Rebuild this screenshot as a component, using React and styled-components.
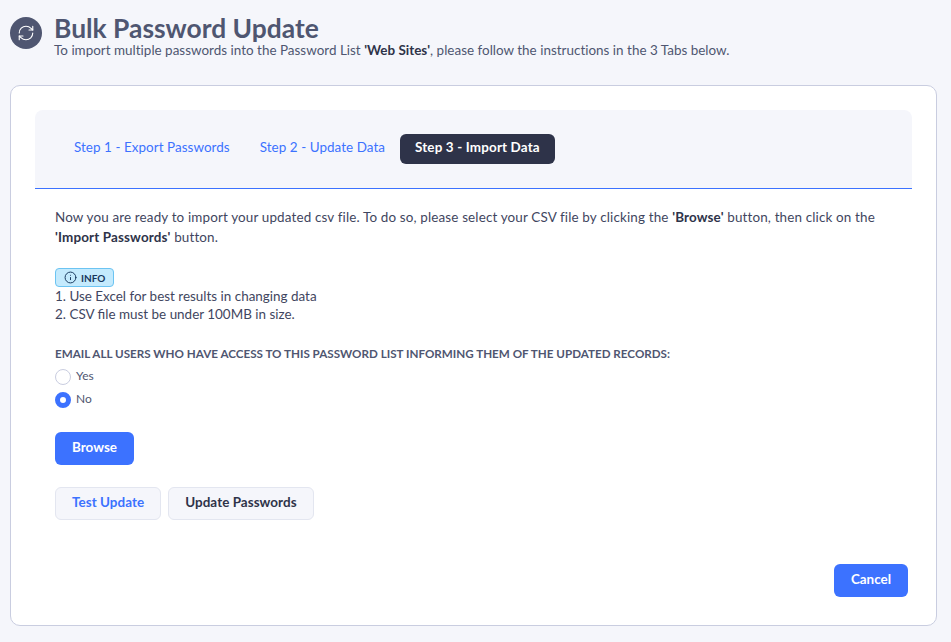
import React from "react";
import styled, { createGlobalStyle } from "styled-components";
import { RefreshCw, Info } from "lucide-react";

const GlobalStyle = createGlobalStyle`
  html, body {
    margin: 0;
    padding: 0;
    background: #f5f6fb;
  }
  body {
    font-family: Lato, "Noto Sans", "Liberation Sans", sans-serif;
    font-size: 13.45px;
    color: #3f4660;
  }
`;

const App = () => {
  return (
    <Page>
      <GlobalStyle />
      <Header>
        <HeaderIcon>
          <RefreshCw size={18} strokeWidth={1.5} />
        </HeaderIcon>
        <HeaderText>
          <Title>Bulk Password Update</Title>
          <Subtitle>
            To import multiple passwords into the Password List <b>'Web Sites'</b>, please follow
            the instructions in the 3 Tabs below.
          </Subtitle>
        </HeaderText>
      </Header>
      <Card>
        <Tabs>
          <Tab>Step 1 - Export Passwords</Tab>
          <Tab>Step 2 - Update Data</Tab>
          <Tab $active>Step 3 - Import Data</Tab>
        </Tabs>
        <Body>
          <Intro>
            Now you are ready to import your updated csv file. To do so, please select your CSV file
            by clicking the <b>'Browse'</b> button, then click on the <b>'Import Passwords'</b>{" "}
            button.
          </Intro>
          <Badge>
            <Info size={13} strokeWidth={1.8} />
            INFO
          </Badge>
          <Notes>
            <div>1. Use Excel for best results in changing data</div>
            <div>2. CSV file must be under 100MB in size.</div>
          </Notes>
          <Label>
            Email all users who have access to this password list informing them of the updated
            records:
          </Label>
          <RadioRow>
            <Radio />
            <RadioText>Yes</RadioText>
          </RadioRow>
          <RadioRow>
            <Radio $checked />
            <RadioText>No</RadioText>
          </RadioRow>
          <BrowseRow>
            <PrimaryButton>Browse</PrimaryButton>
          </BrowseRow>
          <ButtonRow>
            <LightButton $blue>Test Update</LightButton>
            <LightButton>Update Passwords</LightButton>
          </ButtonRow>
          <Footer>
            <PrimaryButton $wide>Cancel</PrimaryButton>
          </Footer>
        </Body>
      </Card>
    </Page>
  );
};

export default App;

const Page = styled.div`
  width: 951px;
  height: 642px;
  box-sizing: border-box;
  padding: 14px 14px 16px 10px;
  overflow: hidden;
`;

const Header = styled.div`
  display: flex;
  align-items: flex-start;
  gap: 12px;
  height: 46px;
  margin-bottom: 25px;
`;

const HeaderIcon = styled.div`
  width: 32px;
  height: 32px;
  margin-top: 3px;
  border-radius: 50%;
  background: #4f5671;
  color: #fff;
  display: flex;
  align-items: center;
  justify-content: center;
  flex-shrink: 0;
`;

const HeaderText = styled.div`
  display: flex;
  flex-direction: column;
`;

const Title = styled.div`
  font-size: 26.4px;
  font-weight: 700;
  line-height: 29px;
  color: #4f5671;
`;

const Subtitle = styled.div`
  line-height: 14px;
  letter-spacing: 0.01px;
  color: #4f5671;

  b {
    color: #2e3349;
  }
`;

const Card = styled.div`
  height: 541px;
  box-sizing: border-box;
  padding: 24px;
  background: #fff;
  border: 1px solid #c9cde0;
  border-radius: 10px;
  display: flex;
  flex-direction: column;
`;

const Tabs = styled.div`
  height: 79px;
  box-sizing: border-box;
  padding: 24px 24px 0;
  display: flex;
  align-items: flex-start;
  background: #f5f6fb;
  border-bottom: 1px solid #3c72ff;
  border-radius: 8px 8px 0 0;
  flex-shrink: 0;
`;

const Tab = styled.div`
  height: 30px;
  box-sizing: border-box;
  padding: 0 15px 5px;
  display: flex;
  align-items: center;
  border-radius: 6px;
  font-weight: ${(p) => (p.$active ? 700 : 400)};
  letter-spacing: ${(p) => (p.$active ? 0.15 : 0.05)}px;
  color: ${(p) => (p.$active ? "#fff" : "#3c72ff")};
  background: ${(p) => (p.$active ? "#2e3349" : "transparent")};
`;

const Body = styled.div`
  flex: 1;
  display: flex;
  flex-direction: column;
  padding: 18px 4px 4px 20px;
`;

const Intro = styled.div`
  max-width: 840px;
  line-height: 20px;
  letter-spacing: 0.145px;
  color: #3f4660;

  b {
    color: #2e3349;
  }
`;

const Badge = styled.div`
  align-self: flex-start;
  margin-top: 21px;
  height: 19px;
  box-sizing: border-box;
  padding: 0 8px;
  display: flex;
  align-items: center;
  gap: 4px;
  font-size: 10px;
  font-weight: 700;
  color: #17365c;
  background: #c4eafd;
  border: 1px solid #6cc4f2;
  border-radius: 4px;
`;

const Notes = styled.div`
  line-height: 18px;
  color: #3f4660;
`;

const Label = styled.div`
  margin-top: 23px;
  font-size: 11.65px;
  font-weight: 700;
  line-height: 16px;
  text-transform: uppercase;
  color: #4f5671;
`;

const RadioRow = styled.div`
  display: flex;
  align-items: center;
  gap: 5px;
  height: 16px;
  margin-top: 7px;
  color: #4f5671;
  font-size: 12px;
`;

const RadioText = styled.span`
  padding-bottom: 4px;
`;

const Radio = styled.span`
  width: 16px;
  height: 16px;
  box-sizing: border-box;
  border-radius: 50%;
  background: #fff;
  border: ${(p) => (p.$checked ? "5px solid #3c72ff" : "1px solid #c9cde0")};
  flex-shrink: 0;
`;

const BrowseRow = styled.div`
  margin-top: 24px;
`;

const PrimaryButton = styled.button`
  height: 33px;
  width: ${(p) => (p.$wide ? 74 : 79)}px;
  padding: 0 0 3px;
  border: 0;
  border-radius: 6px;
  background: #3c72ff;
  color: #fff;
  font-family: inherit;
  font-size: 13.45px;
  font-weight: 700;
`;

const ButtonRow = styled.div`
  display: flex;
  gap: 7px;
  margin-top: 22px;
`;

const LightButton = styled.button`
  height: 33px;
  padding: 0 16px 3px;
  background: #f5f6fb;
  border: 1px solid #e3e6f0;
  border-radius: 6px;
  letter-spacing: 0.05px;
  color: ${(p) => (p.$blue ? "#3c72ff" : "#2e3349")};
  font-family: inherit;
  font-size: 13.45px;
  font-weight: 700;
`;

const Footer = styled.div`
  display: flex;
  justify-content: flex-end;
  margin-top: auto;
`;
